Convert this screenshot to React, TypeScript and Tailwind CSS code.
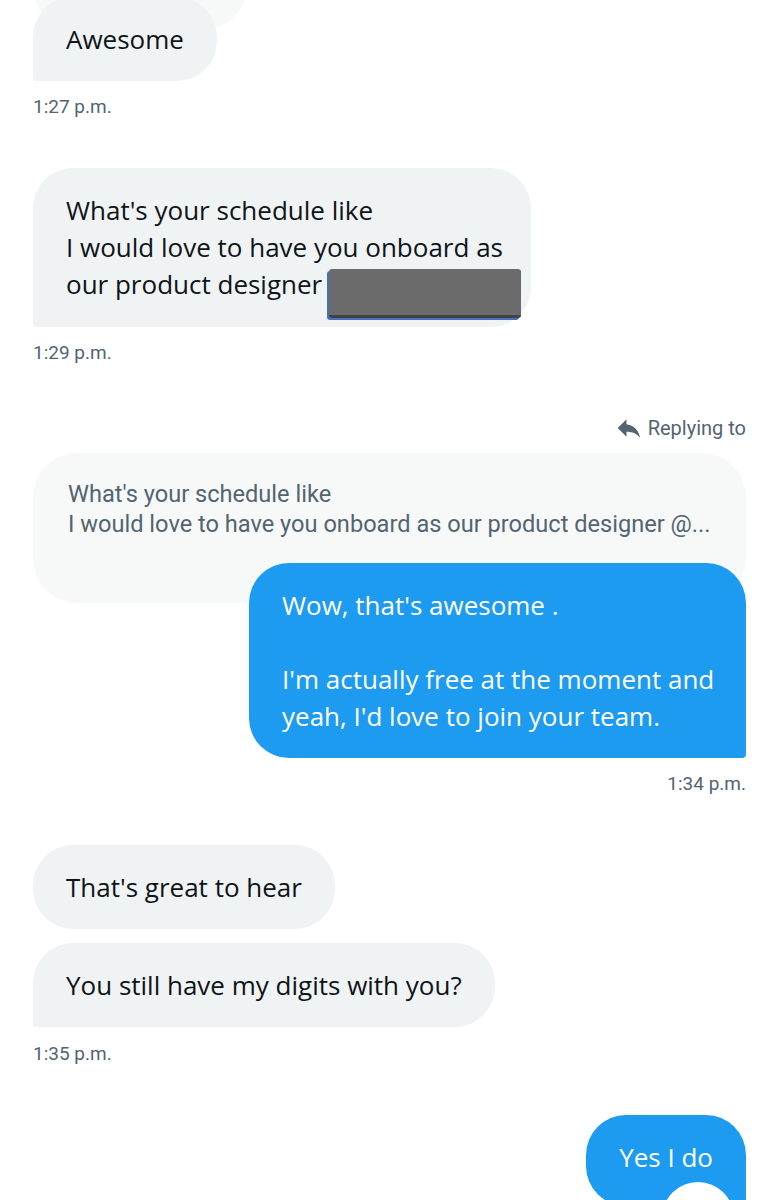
import React from 'react';

const msgFont = { fontFamily: '"Open Sans", "Noto Sans", sans-serif' };
const metaFont = { fontFamily: 'Roboto, "Liberation Sans", sans-serif' };

const Stamp = ({ time, right = false, className = 'mt-[14px]' }: { time: string; right?: boolean; className?: string }) => (
  <div
    style={metaFont}
    className={`${className} text-[19px] leading-[24px] text-[#536471] ${right ? 'self-end' : 'self-start'}`}
  >
    {time}
  </div>
);

const ReplyIcon = () => (
  <svg viewBox="0 0 24 24" className="w-[30px] h-[30px]" fill="#536471">
    <path d="M10 9V5l-7 7 7 7v-4.1c5 0 8.5 1.6 11 5.1-1-5-4-10-11-11z" />
  </svg>
);

export default function App() {
  return (
    <div className="relative min-h-[1200px] h-[1200px] overflow-hidden bg-white pl-[33px] pr-[29px] text-[#0f1419]">
      {/* tail of the previous bubble, mostly scrolled away */}
      <div className="absolute left-[33px] top-[-70px] w-[214px] h-[100px] rounded-[44px] bg-[#f7f9f9]" />

      <div className="relative flex flex-col whitespace-nowrap" style={msgFont}>
        <div className="self-start mt-[-3px] rounded-[40px] rounded-bl-[4px] bg-[#eff3f4] px-[33px] py-[23.5px] text-[26px] leading-[37px]">
          Awesome
        </div>
        <Stamp time="1:27 p.m." />

        <div className="self-start mt-[49px] w-[498px] rounded-[40px] rounded-bl-[4px] bg-[#eff3f4] px-[33px] py-[24px] text-[26px] leading-[37px]">
          What's your schedule like
          <br />
          I would love to have you onboard as
          <br />
          our product designer{' '}
          <span className="inline-block align-top mt-[3px] mb-[-15px] h-[49px] w-[192px] rounded-[3px] bg-[#6b6b6b] border-b-[3px] border-[#3f4247] shadow-[-2px_2px_0_#4a6fb8]" />
        </div>
        <Stamp time="1:29 p.m." />

        <div className="self-end mt-[48px] flex items-center gap-[4px] text-[20px] leading-[24px] text-[#536471]" style={metaFont}>
          <ReplyIcon />
          <span>Replying to</span>
        </div>

        <div
          className="mt-[10px] rounded-[44px] bg-[#f7f9f9] pl-[35px] pr-[30px] pt-[26px] pb-[64px] text-[23.6px] leading-[30px] text-[#536471]"
          style={metaFont}
        >
          What's your schedule like
          <br />
          I would love to have you onboard as our product designer @...
        </div>

        <div className="self-end mt-[-40px] w-[497px] rounded-[40px] rounded-br-[4px] bg-[#1d9bf0] px-[33px] py-[23.5px] text-[26px] leading-[37px] text-white">
          Wow, that's awesome .
          <br />
          <br />
          I'm actually free at the moment and
          <br />
          yeah, I'd love to join your team.
        </div>
        <Stamp time="1:34 p.m." right />

        <div className="self-start mt-[49px] rounded-[40px] bg-[#eff3f4] px-[33px] py-[23.5px] text-[26px] leading-[37px]">
          That's great to hear
        </div>
        <div className="self-start mt-[14px] rounded-[40px] rounded-bl-[4px] bg-[#eff3f4] px-[33px] py-[23.5px] text-[26px] leading-[37px]">
          You still have my digits with you?
        </div>
        <Stamp time="1:35 p.m." className="mt-[15px]" />

        <div className="self-end mt-[49px] rounded-[40px] rounded-br-[4px] bg-[#1d9bf0] px-[33px] pt-[23.5px] pb-[30px] text-[26px] leading-[37px] text-white">
          Yes I do
        </div>
      </div>

      {/* scroll-to-bottom button peeking in */}
      <div className="absolute left-[662px] top-[1182px] h-[72px] w-[72px] rounded-full bg-white" />
    </div>
  );
}
